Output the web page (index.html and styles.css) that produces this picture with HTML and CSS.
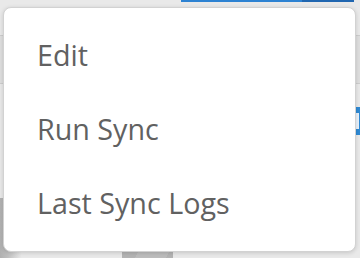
FILE: index.html
```html
<!DOCTYPE html>
<html>
<head>
<meta charset="utf-8">
<link rel="stylesheet" href="styles.css">
</head>
<body>
<div class="backdrop">
  <div class="topbar"><div class="topbar-btn"></div></div>
  <div class="header-row"></div>
  <div class="action-row"><div class="action-btn"><span class="action-glyph"></span></div></div>
  <div class="photo"></div>
</div>
<div class="menu">
  <div class="menu-item">Edit</div>
  <div class="menu-item">Run Sync</div>
  <div class="menu-item">Last Sync Logs</div>
</div>
</body>
</html>
```
FILE: styles.css
```css
html, body {
  margin: 0;
  padding: 0;
}
body {
  width: 360px;
  height: 258px;
  overflow: hidden;
  background: #e9e9e9;
  position: relative;
  font-family: "Open Sans", "Liberation Sans", sans-serif;
}
.backdrop {
  display: flex;
  flex-direction: column;
  height: 258px;
}
.topbar {
  height: 2px;
  display: flex;
}
.topbar-btn {
  margin-left: 181px;
  width: 173px;
  height: 2px;
  background: linear-gradient(to right, #2d82d2 0, #2d82d2 70%, #2066b0 70%, #2066b0 100%);
}
.header-row {
  margin-top: 33px;
  height: 47px;
  background: #dedede;
  border-top: 1px solid #cdcdcd;
  border-bottom: 1px solid #cdcdcd;
}
.action-row {
  margin-top: 23px;
  height: 28px;
  display: flex;
  justify-content: flex-end;
}
.action-btn {
  width: 6px;
  height: 28px;
  background: #2f8ad4;
  display: flex;
  align-items: center;
  padding-left: 2px;
  box-sizing: border-box;
}
.action-glyph {
  width: 3px;
  height: 16px;
  background: #e8f1fa;
}
.photo {
  margin-top: auto;
  height: 60px;
  background:
    linear-gradient(to right, #b0b0b0 0, #bdbdbd 2%, transparent 6%),
    linear-gradient(115deg, transparent 42%, #bcbcbc 42%, #bcbcbc 50%, transparent 50%),
    linear-gradient(to right, transparent 34%, #b3b3b3 34%, #b3b3b3 48%, transparent 48%);
}
.menu {
  position: absolute;
  left: 3px;
  top: 7px;
  width: 353px;
  height: 245px;
  box-sizing: border-box;
  background: #fff;
  border: 1px solid #d2d2d2;
  border-radius: 8px;
  box-shadow: 0 1px 4px rgba(0, 0, 0, 0.15);
  padding: 11px 0;
  display: flex;
  flex-direction: column;
}
.menu-item {
  height: 74px;
  display: flex;
  align-items: center;
  padding-left: 33px;
  font-size: 28.7px;
  color: #616161;
  line-height: 1;
}
```
